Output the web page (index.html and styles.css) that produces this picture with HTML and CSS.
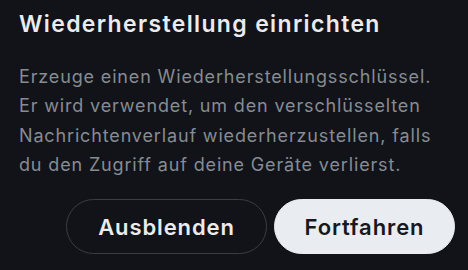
FILE: index.html
```html
<!DOCTYPE html>
<html lang="de">
<head>
<meta charset="utf-8">
<link rel="stylesheet" href="styles.css">
</head>
<body>
<div class="dialog">
  <h1 class="title">Wiederherstellung einrichten</h1>
  <p class="desc">Erzeuge einen Wiederherstellungsschlüssel. Er wird verwendet, um den verschlüsselten Nachrichtenverlauf wiederherzustellen, falls du den Zugriff auf deine Geräte verlierst.</p>
  <div class="actions">
    <button class="btn btn-secondary">Ausblenden</button>
    <button class="btn btn-primary">Fortfahren</button>
  </div>
</div>
</body>
</html>
```
FILE: styles.css
```css
html, body {
  margin: 0;
  padding: 0;
  background: #111318;
  width: 468px;
  height: 270px;
  overflow: hidden;
}
.dialog {
  font-family: Inter, "Noto Sans", sans-serif;
  padding: 10px 13px 0 19px;
  display: flex;
  flex-direction: column;
}
.title {
  margin: 0;
  font-size: 23px;
  line-height: 28px;
  font-weight: 600;
  letter-spacing: 1.35px;
  color: #e9ebef;
}
.desc {
  margin: 24px 0 0 0;
  font-size: 18px;
  line-height: 29.3px;
  font-weight: 400;
  letter-spacing: 0.85px;
  color: #868b94;
  width: 422px;
}
.actions {
  display: flex;
  justify-content: flex-end;
  gap: 7px;
  margin-top: 20px;
}
.btn {
  font-family: Inter, "Noto Sans", sans-serif;
  font-size: 22px;
  font-weight: 600;
  letter-spacing: 0.9px;
  height: 55px;
  border-radius: 28px;
  padding: 0;
  cursor: pointer;
}
.btn-secondary {
  width: 201px;
  background: transparent;
  border: 1px solid #3a3d45;
  color: #e9ebef;
}
.btn-primary {
  width: 181px;
  background: #e9ecf1;
  border: 1px solid #e9ecf1;
  color: #17191e;
}
```
